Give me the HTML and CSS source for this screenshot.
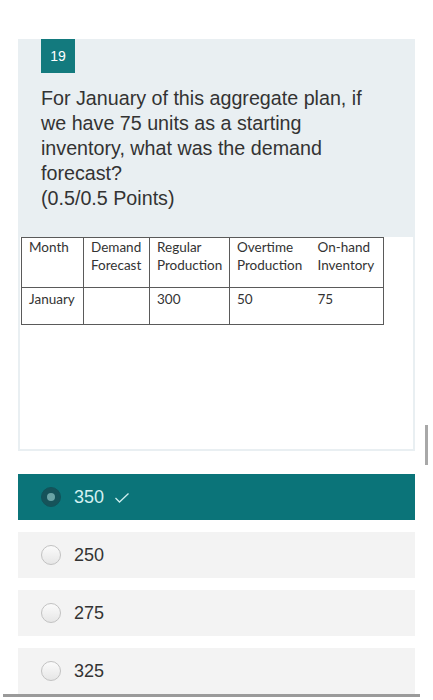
FILE: index.html
```html
<!DOCTYPE html>
<html>
<head>
<meta charset="utf-8">
<link rel="stylesheet" href="styles.css">
</head>
<body>
<div class="page">
  <div class="card">
    <div class="badge">19</div>
    <div class="question">For January of this aggregate plan, if we have 75 units as a starting inventory, what was the demand forecast?<br>(0.5/0.5 Points)</div>
    <div class="figure">
      <table class="plan">
        <tr class="head">
          <td class="c1">Month</td>
          <td class="c2">Demand Forecast</td>
          <td class="c3">Regular Production</td>
          <td class="c4">Overtime Production</td>
          <td class="c5">On-hand Inventory</td>
        </tr>
        <tr class="data">
          <td class="c1">January</td>
          <td class="c2"></td>
          <td class="c3">300</td>
          <td class="c4">50</td>
          <td class="c5">75</td>
        </tr>
      </table>
    </div>
  </div>
  <div class="options">
    <div class="option selected">
      <span class="radio on"><span class="dot"></span></span>
      <span class="label">350</span>
      <svg class="check" width="16" height="12" viewBox="0 0 16 12"><polyline points="1.5,6 5.5,10 14.5,1.5" fill="none" stroke="#cdeeee" stroke-width="1.3"/></svg>
    </div>
    <div class="option">
      <span class="radio"></span>
      <span class="label">250</span>
    </div>
    <div class="option">
      <span class="radio"></span>
      <span class="label">275</span>
    </div>
    <div class="option">
      <span class="radio"></span>
      <span class="label">325</span>
    </div>
  </div>
  <div class="bottomline"></div>
</div>
<div class="scrollbar"></div>
</body>
</html>
```
FILE: styles.css
```css
html, body {
  margin: 0;
  padding: 0;
  background: #ffffff;
}
body {
  font-family: "Liberation Sans", Arial, sans-serif;
  color: #333333;
}
.page {
  padding-top: 39px;
  margin-left: 18px;
  width: 397px;
}
.card {
  background: #e9eff2;
  padding-bottom: 2px;
}
.badge {
  width: 34px;
  height: 34px;
  margin-left: 23px;
  background: #137a7e;
  color: #ffffff;
  font-size: 14px;
  display: flex;
  align-items: center;
  justify-content: center;
}
.question {
  margin: 13px 0 26px 23px;
  width: 340px;
  font-size: 19.7px;
  line-height: 25px;
  color: #333333;
}
.figure {
  margin: 0 2px;
  height: 212px;
  background: #ffffff;
  padding-left: 1px;
}
.plan {
  border-collapse: collapse;
  font-family: Lato, "Open Sans", sans-serif;
  font-size: 13.5px;
  line-height: 17.5px;
  color: #333333;
  table-layout: fixed;
  width: 362px;
}
.plan td {
  box-sizing: border-box;
  border: 1.5px solid #5a5a5a;
  vertical-align: top;
  padding: 1px 2px 0 7px;
  white-space: nowrap;
}
.plan .head td {
  height: 50px;
}
.plan .data td {
  height: 37px;
  padding-top: 3px;
}
.plan .c1 { width: 62px; }
.plan .c2 { width: 66px; }
.plan .c3 { width: 80px; }
.plan .c4 { width: 80px; border-right: none; }
.plan .c5 { width: 74px; border-left: none; padding-left: 8px; }
.plan .head .c2, .plan .head .c3, .plan .head .c4, .plan .head .c5 {
  white-space: normal;
}
.options {
  margin-top: 23px;
  display: flex;
  flex-direction: column;
  gap: 12px;
}
.option {
  height: 46px;
  background: #f3f3f3;
  display: flex;
  align-items: center;
  padding-left: 23px;
  font-size: 18px;
  color: #333333;
}
.option.selected {
  background: #0b7479;
  color: #d4f1f1;
}
.radio {
  width: 18px;
  height: 18px;
  border-radius: 50%;
  border: 1px solid #c2c2c2;
  background: linear-gradient(#fbfbfb, #e6e6e6);
  margin-right: 13px;
  display: flex;
  align-items: center;
  justify-content: center;
}
.radio.on {
  border-color: #11535a;
  background: #16535a;
}
.radio .dot {
  width: 8px;
  height: 8px;
  border-radius: 50%;
  background: #6aa3a5;
}
.check {
  margin-left: 10px;
  margin-top: 2px;
}
.bottomline {
  height: 3px;
  margin-left: -15px;
  width: 417px;
  background: #9a9a9a;
}
.scrollbar {
  position: absolute;
  left: 425px;
  top: 425px;
  width: 3px;
  height: 40px;
  background: #a8a8a8;
}
```
